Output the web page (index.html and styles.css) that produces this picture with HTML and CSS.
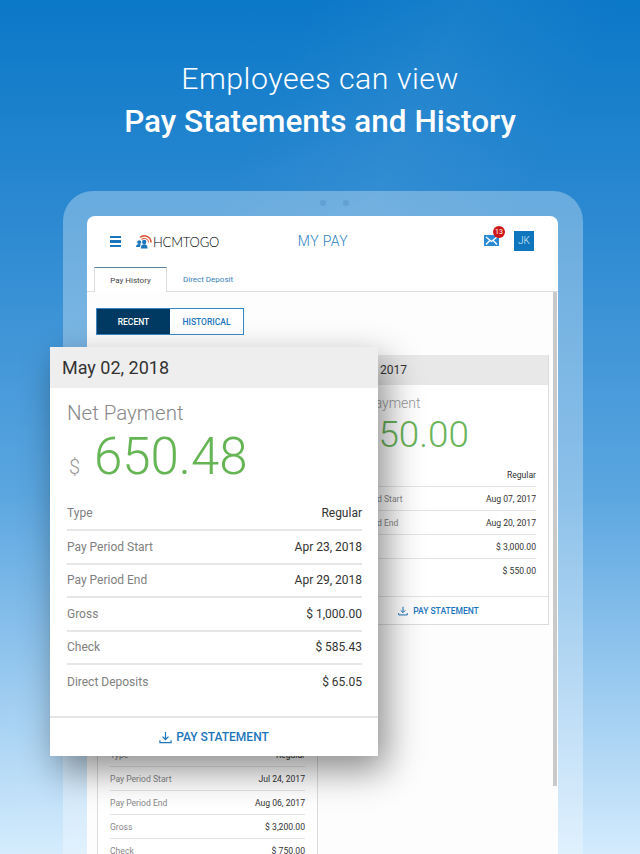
FILE: index.html
```html
<!DOCTYPE html>
<html lang="en">
<head>
    <meta charset="UTF-8">
    <meta name="viewport" content="width=device-width, initial-scale=1.0">
    <title>HCMTOGO My Pay</title>
    <link rel="stylesheet" href="styles.css">
</head>
<body>
    <div class="page">
        <div class="headline">
            <p class="headline-light">Employees can view</p>
            <p class="headline-bold">Pay Statements and History</p>
        </div>

        <div class="tablet">
            <div class="camera"><span></span><span></span></div>
            <div class="screen">
                <div class="app-header">
                    <div class="brand">
                        <div class="burger"><span></span><span></span><span></span></div>
                        <svg class="logo-mark" viewBox="0 0 16 15" width="16" height="15">
                            <path d="M4 3.500a6.600 6.600 0 0 1 11 5" fill="none" stroke="#d9502e" stroke-width="1.500"/>
                            <path d="M5.500 5.500a4.300 4.300 0 0 1 7.200 3" fill="none" stroke="#e2735a" stroke-width="1.200"/>
                            <circle cx="3.200" cy="8.200" r="1.900" fill="#1b75bc"/>
                            <circle cx="8.200" cy="8" r="2.200" fill="#1b75bc"/>
                            <path d="M0 13c0-2 1.300-3 3.200-3 .8 0 1.300.2 1.800.5-.7.700-1 1.500-1 2.500zM4.800 14.500c0-2.800 1.400-4.200 3.400-4.200s3.400 1.400 3.400 4.200z" fill="#1b75bc"/>
                        </svg>
                        <span class="logo-text">HCMTOGO</span>
                    </div>
                    <div class="app-title">MY PAY</div>
                    <div class="header-right">
                        <div class="mail">
                            <svg viewBox="0 0 15 11" width="15" height="11">
                                <rect width="15" height="11" fill="#2b8ad6"/>
                                <path d="M2 2l5.500 4.500L13 2M2 9.500l3.800-4M13 9.500l-3.800-4" fill="none" stroke="#fff" stroke-width="1.300"/>
                            </svg>
                            <span class="badge">13</span>
                        </div>
                        <div class="avatar">JK</div>
                    </div>
                </div>

                <div class="tabs">
                    <div class="tab tab-active">Pay History</div>
                    <div class="tab">Direct Deposit</div>
                </div>

                <div class="content">
                    <div class="toggle">
                        <div class="toggle-btn toggle-on">RECENT</div>
                        <div class="toggle-btn">HISTORICAL</div>
                    </div>

                    <div class="card-grid">
                        <div class="card"></div>

                        <div class="card">
                            <div class="card-date">Aug 21, 2017</div>
                            <div class="card-net">Net Payment</div>
                            <div class="card-amount"><span class="dollar">$</span>650.00</div>
                            <div class="rows">
                                <div class="row"><span>Type</span><b>Regular</b></div>
                                <div class="row"><span>Pay Period Start</span><b>Aug 07, 2017</b></div>
                                <div class="row"><span>Pay Period End</span><b>Aug 20, 2017</b></div>
                                <div class="row"><span>Gross</span><b>$ 3,000.00</b></div>
                                <div class="row"><span>Check</span><b>$ 550.00</b></div>
                            </div>
                            <div class="card-foot">
                                <svg class="dl-icon" viewBox="0 0 14 14"><path d="M7 1v8M3.800 6L7 9.200 10.200 6M1 10v2.500h12V10" fill="none" stroke="currentColor" stroke-width="1.400"/></svg>
                                PAY STATEMENT
                            </div>
                        </div>

                        <div class="card">
                            <div class="card-date">Aug 07, 2017</div>
                            <div class="card-net">Net Payment</div>
                            <div class="card-amount"><span class="dollar">$</span>750.00</div>
                            <div class="rows">
                                <div class="row"><span>Type</span><b>Regular</b></div>
                                <div class="row"><span>Pay Period Start</span><b>Jul 24, 2017</b></div>
                                <div class="row"><span>Pay Period End</span><b>Aug 06, 2017</b></div>
                                <div class="row"><span>Gross</span><b>$ 3,200.00</b></div>
                                <div class="row"><span>Check</span><b>$ 750.00</b></div>
                            </div>
                        </div>
                    </div>
                </div>
                <div class="scrollbar"></div>
            </div>
        </div>

        <div class="float-card">
            <div class="float-date">May 02, 2018</div>
            <div class="float-net">Net Payment</div>
            <div class="float-amount"><span class="float-dollar">$</span>650.48</div>
            <div class="float-rows">
                <div class="float-row"><span>Type</span><b>Regular</b></div>
                <div class="float-row"><span>Pay Period Start</span><b>Apr 23, 2018</b></div>
                <div class="float-row"><span>Pay Period End</span><b>Apr 29, 2018</b></div>
                <div class="float-row"><span>Gross</span><b>$ 1,000.00</b></div>
                <div class="float-row"><span>Check</span><b>$ 585.43</b></div>
                <div class="float-row"><span>Direct Deposits</span><b>$ 65.05</b></div>
            </div>
            <div class="float-foot">
                <svg class="float-icon" viewBox="0 0 14 14"><path d="M7 1v8M3.800 6L7 9.200 10.200 6M1 10v2.500h12V10" fill="none" stroke="currentColor" stroke-width="1.300"/></svg>
                PAY STATEMENT
            </div>
        </div>
    </div>
</body>
</html>
```

FILE: styles.css
```css
html, body {
    margin: 0;
    padding: 0;
}

body {
    font-family: 'Roboto', 'Liberation Sans', sans-serif;
    color: #333333;
}

.page {
    position: relative;
    width: 640px;
    height: 854px;
    overflow: hidden;
    background:
        linear-gradient(115deg, rgba(255, 255, 255, 0) 30%, rgba(255, 255, 255, 0.05) 45%, rgba(255, 255, 255, 0) 60%),
        linear-gradient(to bottom, #0b78c8 0%, #2f8bd2 28%, #5ba6e0 58%, #9fcdf1 82%, #d3ebfd 100%);
}

.headline {
    height: 191px;
    text-align: center;
    color: #ffffff;
    box-sizing: border-box;
    padding-top: 60px;
}

.headline p {
    margin: 0;
}

.headline-light {
    font-size: 30.3px;
    font-weight: 300;
    line-height: 38px;
    letter-spacing: 0.5px;
}

.headline-bold {
    font-size: 31.5px;
    font-weight: 500;
    line-height: 47px;
}

/* tablet frame */
.tablet {
    position: relative;
    width: 520px;
    height: 720px;
    margin-left: 63px;
    box-sizing: border-box;
    padding: 25px 25px 0 24px;
    border-radius: 30px;
    background: rgba(255, 255, 255, 0.3);
}

.camera {
    position: absolute;
    top: 9px;
    left: 257px;
    display: flex;
    gap: 17px;
}

.camera span {
    width: 6px;
    height: 6px;
    border-radius: 50%;
    background: rgba(60, 120, 170, 0.25);
}

.screen {
    position: relative;
    height: 695px;
    background: #ffffff;
    border-radius: 8px 8px 0 0;
}

.app-header {
    display: flex;
    align-items: center;
    justify-content: space-between;
    height: 51px;
    padding: 0 24px 0 23px;
}

.brand {
    display: flex;
    align-items: center;
    width: 165px;
}

.burger {
    display: flex;
    flex-direction: column;
    gap: 2px;
    width: 11px;
    margin-right: 15px;
}

.burger span {
    height: 2.4px;
    background: #1b75bc;
}

.logo-text {
    font-family: 'Lato', sans-serif;
    font-size: 13px;
    font-weight: 300;
    color: #000000;
    letter-spacing: -0.2px;
    margin-left: 1px;
}

.app-title {
    font-size: 14px;
    font-weight: 300;
    color: #2d7fc0;
    letter-spacing: 0.4px;
    margin-right: 113px;
    margin-bottom: 2px;
}

.header-right {
    display: flex;
    align-items: center;
    gap: 15px;
    margin-bottom: 2px;
}

.mail {
    position: relative;
    display: flex;
    height: 11px;
}

.badge {
    position: absolute;
    top: -9px;
    right: -6px;
    width: 12px;
    height: 12px;
    border-radius: 50%;
    background: #d01717;
    color: #ffffff;
    font-size: 7px;
    line-height: 12px;
    text-align: center;
}

.avatar {
    width: 20px;
    height: 20px;
    background: #0f75bd;
    color: #d8ebf8;
    font-size: 10px;
    font-weight: 300;
    line-height: 20px;
    text-align: center;
}

.tabs {
    display: flex;
    height: 25px;
    padding-left: 7px;
    border-bottom: 1px solid #dddddd;
    box-sizing: border-box;
}

.tab {
    font-size: 8px;
    line-height: 25px;
    padding: 0 16px;
    color: #3a82bd;
}

.tab-active {
    width: 73px;
    box-sizing: border-box;
    height: 25px;
    padding: 0;
    text-align: center;
    color: #444444;
    background: #ffffff;
    border: 1px solid #dddddd;
    border-top: 1px solid #5d7f9c;
    border-bottom: none;
}

.content {
    padding: 16px 0 0 9px;
    background: #fdfdfd;
    height: 603px;
    overflow: hidden;
}

.toggle {
    display: flex;
    width: 148px;
    height: 27px;
    box-sizing: border-box;
    border: 1px solid #3a86c4;
    background: #ffffff;
}

.toggle-btn {
    flex: 1;
    font-size: 8.5px;
    font-weight: 500;
    line-height: 26px;
    text-align: center;
    color: #1b75bc;
}

.toggle-on {
    flex: 0 0 73px;
    background: #003a63;
    color: #ffffff;
}

/* cards behind the floating one */
.card-grid {
    display: grid;
    grid-template-columns: 221px 221px;
    grid-auto-rows: 270px;
    column-gap: 10px;
    row-gap: 10px;
    margin: 20px 0 0 1px;
}

.card {
    background: #ffffff;
    border: 1px solid #dcdcdc;
    border-top: none;
    box-sizing: border-box;
}

.card-date {
    height: 30px;
    line-height: 31px;
    padding-left: 8px;
    background: #e8e8e8;
    font-size: 12px;
    color: #333333;
}

.card-net {
    margin: 10px 0 0 12px;
    font-size: 14px;
    font-weight: 300;
    line-height: 17px;
    color: #999999;
}

.card-amount {
    display: flex;
    align-items: baseline;
    margin: 1px 0 0 12px;
    font-size: 36.8px;
    font-weight: 300;
    line-height: 44px;
    color: #6ab45a;
}

.dollar {
    width: 17px;
    font-size: 13px;
    color: #999999;
}

.rows {
    margin: -2px 12px 0;
}

.row {
    display: flex;
    justify-content: space-between;
    align-items: center;
    height: 24px;
    box-sizing: border-box;
    border-bottom: 1px solid #e4e4e4;
    font-size: 8.6px;
    color: #888888;
}

.row:last-child {
    border-bottom: none;
}

.row b {
    font-weight: 400;
    color: #333333;
}

.card-foot {
    display: flex;
    align-items: center;
    justify-content: center;
    gap: 5px;
    height: 27px;
    margin-top: 13px;
    border-top: 1px solid #e4e4e4;
    font-size: 8.5px;
    font-weight: 500;
    color: #1b75bc;
}

.dl-icon {
    width: 10px;
    height: 10px;
}

.scrollbar {
    position: absolute;
    top: 76px;
    right: 1px;
    width: 4px;
    height: 494px;
    background: #c9c9c9;
}

/* floating card */
.float-card {
    position: absolute;
    left: 50px;
    top: 347px;
    width: 328px;
    height: 409px;
    background: #ffffff;
    box-shadow: 8px 14px 34px rgba(0, 0, 0, 0.45);
}

.float-date {
    height: 41px;
    line-height: 41px;
    padding-left: 12px;
    background: #eeeeee;
    font-size: 18px;
    color: #333333;
}

.float-net {
    margin: 13px 0 0 17px;
    font-size: 20.5px;
    font-weight: 300;
    line-height: 24px;
    color: #888888;
}

.float-amount {
    display: flex;
    align-items: baseline;
    margin: 1px 0 0 19px;
    font-size: 51px;
    font-weight: 300;
    line-height: 62px;
    color: #66b554;
}

.float-dollar {
    width: 25px;
    font-size: 20px;
    color: #999999;
}

.float-rows {
    margin: -0.5px 16px 0 17px;
}

.float-row {
    display: flex;
    justify-content: space-between;
    align-items: center;
    height: 33.5px;
    box-sizing: border-box;
    border-bottom: 2px solid #e6e6e6;
    font-size: 12px;
    color: #808080;
}

.float-row:last-child {
    border-bottom: none;
}

.float-row b {
    font-weight: 400;
    color: #333333;
}

.float-foot {
    position: absolute;
    left: 0;
    right: 0;
    bottom: 0;
    height: 38px;
    display: flex;
    align-items: center;
    justify-content: center;
    gap: 4px;
    border-top: 2px solid #e6e6e6;
    font-size: 12px;
    font-weight: 500;
    color: #1b75bc;
}

.float-icon {
    width: 13px;
    height: 13px;
}
```
